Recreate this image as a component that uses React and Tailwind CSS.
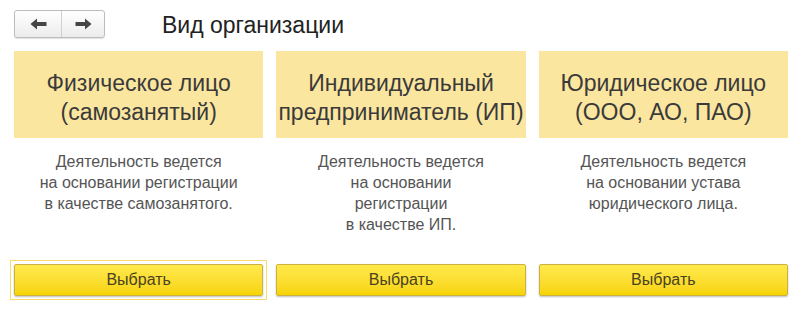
import React from "react";

const cards = [
  {
    title: ["Физическое лицо", "(самозанятый)"],
    text: ["Деятельность ведется", "на основании регистрации", "в качестве самозанятого."],
    focused: true,
  },
  {
    title: ["Индивидуальный", "предприниматель (ИП)"],
    text: ["Деятельность ведется", "на основании", "регистрации", "в качестве ИП."],
  },
  {
    title: ["Юридическое лицо", "(ООО, АО, ПАО)"],
    text: ["Деятельность ведется", "на основании устава", "юридического лица."],
  },
];

function Arrow({ dir }) {
  return (
    <svg width="17" height="12" viewBox="0 0 17 12" className={dir === "left" ? "" : "rotate-180"}>
      <path d="M0.5 6 L7 0.5 L7 4 L16.5 4 L16.5 8 L7 8 L7 11.5 Z" fill="#454545" />
    </svg>
  );
}

export default function App() {
  return (
    <div className="w-[800px] h-[320px] bg-white overflow-hidden" style={{ fontFamily: '"Liberation Sans", Arial, sans-serif' }}>
      {/* top bar */}
      <div className="flex items-center pl-[14px] pt-[10px] h-[38px]">
        <div className="flex h-[28px] w-[91px] rounded-[3px] border border-[#bdbdbd] bg-gradient-to-b from-white to-[#ececec] shadow-[0_1px_1px_rgba(0,0,0,0.12)]">
          <button className="w-[47px] flex items-center justify-center border-r border-[#d0d0d0]">
            <Arrow dir="left" />
          </button>
          <button className="flex-1 flex items-center justify-center">
            <Arrow dir="right" />
          </button>
        </div>
        <h1 className="ml-[57px] text-[23px] leading-none text-[#222] mt-[2px]">Вид организации</h1>
      </div>

      {/* cards */}
      <div className="grid grid-cols-3 gap-x-[13px] pl-[14px] pr-[12px] mt-[13px]">
        {cards.map((c, i) => (
          <div key={i} className="flex flex-col">
            <div className="h-[87px] pt-[6px] bg-[#fbe6a0] flex flex-col items-center justify-center text-[23px] leading-[29px] text-[#3a3a3a]">
              {c.title.map((t) => (
                <div key={t}>{t}</div>
              ))}
            </div>
            <div className="h-[126px] pt-[13px] flex flex-col items-center text-[16px] leading-[21px] text-[#555]">
              {c.text.map((t) => (
                <div key={t}>{t}</div>
              ))}
            </div>
            <div className="relative">
              {c.focused && (
                <div className="absolute -inset-[4px] border border-[#f6dc70] pointer-events-none" />
              )}
              <button className="w-full h-[32px] rounded-[2px] border border-[#cbb240] bg-gradient-to-b from-[#ffe94a] to-[#f7d400] shadow-[0_1px_2px_rgba(0,0,0,0.25)] text-[16px] text-[#4a4220]">
                Выбрать
              </button>
            </div>
          </div>
        ))}
      </div>
    </div>
  );
}
